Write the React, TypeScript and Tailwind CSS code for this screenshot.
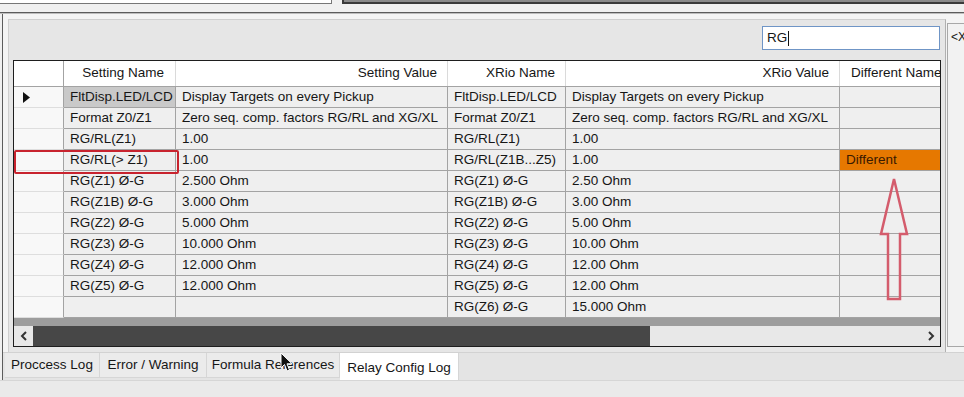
import React from 'react'

type Row = {
  mark?: boolean
  name: string
  value: string
  xName: string
  xValue: string
  diff?: string
}

const rows: Row[] = [
  { mark: true, name: 'FltDisp.LED/LCD', value: 'Display Targets on every Pickup', xName: 'FltDisp.LED/LCD', xValue: 'Display Targets on every Pickup' },
  { name: 'Format Z0/Z1', value: 'Zero seq. comp. factors RG/RL and XG/XL', xName: 'Format Z0/Z1', xValue: 'Zero seq. comp. factors RG/RL and XG/XL' },
  { name: 'RG/RL(Z1)', value: '1.00', xName: 'RG/RL(Z1)', xValue: '1.00' },
  { name: 'RG/RL(> Z1)', value: '1.00', xName: 'RG/RL(Z1B...Z5)', xValue: '1.00', diff: 'Different' },
  { name: 'RG(Z1) Ø-G', value: '2.500 Ohm', xName: 'RG(Z1) Ø-G', xValue: '2.50 Ohm' },
  { name: 'RG(Z1B) Ø-G', value: '3.000 Ohm', xName: 'RG(Z1B) Ø-G', xValue: '3.00 Ohm' },
  { name: 'RG(Z2) Ø-G', value: '5.000 Ohm', xName: 'RG(Z2) Ø-G', xValue: '5.00 Ohm' },
  { name: 'RG(Z3) Ø-G', value: '10.000 Ohm', xName: 'RG(Z3) Ø-G', xValue: '10.00 Ohm' },
  { name: 'RG(Z4) Ø-G', value: '12.000 Ohm', xName: 'RG(Z4) Ø-G', xValue: '12.00 Ohm' },
  { name: 'RG(Z5) Ø-G', value: '12.000 Ohm', xName: 'RG(Z5) Ø-G', xValue: '12.00 Ohm' },
  { name: '', value: '', xName: 'RG(Z6) Ø-G', xValue: '15.000 Ohm' }
]

const tabs = [
  { label: 'Proccess Log', w: 'w-[95px]' },
  { label: 'Error / Warning', w: 'w-[107px]' },
  { label: 'Formula References', w: 'w-[133px]' }
]

const cols = 'grid grid-cols-[50px_112px_272px_118px_274px_100px]'

function Cell({ children, selected, last }: { children?: React.ReactNode; selected?: boolean; last?: boolean }) {
  return (
    <div
      className={`h-[21px] flex items-center pl-[6px] whitespace-nowrap overflow-hidden border-b border-[#a3a3a3] ${
        last ? '' : 'border-r'
      } ${selected ? 'bg-[#c9c9c9]' : 'bg-[#efefef]'}`}
    >
      {children}
    </div>
  )
}

function Grid() {
  return (
    <div className="relative w-[928px] h-[287px] border border-[#1e1e1e] bg-[#9d9d9d] flex flex-col">
      {/* header */}
      <div className={`${cols} h-[26px] bg-white border-b border-[#a3a3a3]`}>
        <div className="border-r border-[#a3a3a3]" />
        <div className="flex items-center justify-end pr-[11px] border-r border-[#dadada]">Setting Name</div>
        <div className="flex items-center justify-end pr-[10px] border-r border-[#dadada]">Setting Value</div>
        <div className="flex items-center justify-end pr-[10px] border-r border-[#dadada]">XRio Name</div>
        <div className="flex items-center justify-end pr-[10px] border-r border-[#dadada]">XRio Value</div>
        <div className="flex items-center pl-[11px] whitespace-nowrap overflow-hidden">Different Name</div>
      </div>

      {rows.map((r, i) => (
        <div key={i} className={cols}>
          <div className="h-[21px] flex items-center pl-[9px] bg-[#f8f8f8] border-b border-[#dedede] border-r border-r-[#a3a3a3]">
            {r.mark && (
              <svg width="7" height="11" viewBox="0 0 7 11">
                <path d="M0 0 L7 5.5 L0 11 Z" fill="#111" />
              </svg>
            )}
          </div>
          <Cell selected={i === 0}>{r.name}</Cell>
          <Cell>{r.value}</Cell>
          <Cell>{r.xName}</Cell>
          <Cell>{r.xValue}</Cell>
          {r.diff ? (
            <div className="h-[21px] flex items-center pl-[6px] bg-[#e67800] text-[#3a1a00] border-b border-[#a3a3a3]">
              {r.diff}
            </div>
          ) : (
            <Cell last />
          )}
        </div>
      ))}

      <div className="flex-1" />

      {/* horizontal scrollbar */}
      <div className="h-[20px] flex bg-[#e8e8e8]">
        <div className="w-[19px] flex items-center justify-center">
          <svg width="8" height="10" viewBox="0 0 8 10">
            <path d="M6 1 L2 5 L6 9" fill="none" stroke="#333" strokeWidth="2" />
          </svg>
        </div>
        <div className="w-[617px] bg-[#474747]" />
        <div className="flex-1" />
        <div className="w-[19px] flex items-center justify-center">
          <svg width="8" height="10" viewBox="0 0 8 10">
            <path d="M2 1 L6 5 L2 9" fill="none" stroke="#333" strokeWidth="2" />
          </svg>
        </div>
      </div>

      {/* highlight box */}
      <div className="absolute left-0 top-[89px] w-[165px] h-[24px] border-2 border-[#c8232e] rounded-[2px]" />

      {/* arrow */}
      <svg className="absolute left-[865px] top-[116px]" width="32" height="128" viewBox="0 0 32 128">
        <path
          d="M15 2 L28 57 L21 57 L21 122 L9 122 L9 57 L2 57 Z"
          fill="none"
          stroke="#d45c6c"
          strokeWidth="2.5"
          strokeLinejoin="miter"
        />
      </svg>
    </div>
  )
}

export default function App() {
  return (
    <div className="relative w-[964px] h-[397px] overflow-hidden bg-[#f0f0f0] text-[13.5px] text-[#161616] font-['Liberation_Sans',Arial,sans-serif] flex flex-col">
      {/* top strip */}
      <div className="flex h-[4px]">
        <div className="w-[332px] bg-white border-r border-b border-[#777]" />
        <div className="w-[10px]" />
        <div className="flex-1 bg-[#8a8a8a] border-l-2 border-b-2 border-[#3a3a3a]" />
      </div>
      <div className="h-[8px]" />
      <div className="h-[2px] border-t border-[#5c5c5c] bg-[#bdbdbd]" />

      <div className="flex-1 flex flex-col ml-[2px] border-l border-[#5c5c5c]">
        {/* tab page */}
        <div className="h-[338px] flex pl-[5px] pt-[5px] bg-[#f4f4f4]">
          <div className="w-[938px] flex flex-col bg-[#e6e6e6] border-l border-t border-[#cfcfcf] border-r border-r-[#b0b0b0]">
            <div className="h-[40px] flex items-start justify-end pr-[5px] pt-[6px]">
              <div className="w-[178px] h-[24px] bg-white border border-[#6f95c6] flex items-center pl-[4px]">
                <span>RG</span>
                <span className="w-px h-[15px] bg-[#111] ml-px" />
              </div>
            </div>
            <div className="pl-[4px]">
              <Grid />
            </div>
          </div>
          <div className="flex-1 mt-[4px] mb-[5px] ml-[1px] bg-[#f2f2f2] border-l border-t border-b border-[#a8a8a8] pl-[3px] pt-[4px] overflow-hidden whitespace-nowrap text-[12px]">
            &lt;X
          </div>
        </div>

        {/* tabs */}
        <div className="h-[28px] flex items-start pl-[2px] border-t border-[#d2d2d2] bg-[#e4e4e4]">
          {tabs.map(t => (
            <div
              key={t.label}
              className={`${t.w} h-[25px] flex items-center justify-center bg-[#ebebeb] border-r border-b border-[#d6d6d6] whitespace-nowrap`}
            >
              {t.label}
            </div>
          ))}
          <div className="w-[119px] h-[28px] flex items-center justify-center bg-white border-r border-[#d6d6d6] pt-[3px] whitespace-nowrap">
            Relay Config Log
          </div>
        </div>
      </div>
      <div className="h-[17px] border-t border-[#d6d6d6] bg-[#eaeaea]" />

      {/* mouse pointer */}
      <svg className="absolute left-[280px] top-[352px]" width="14" height="21" viewBox="0 0 14 21">
        <path d="M1 1 L1 16 L4.5 12.5 L7 19 L9.5 18 L7 11.8 L12 11.8 Z" fill="#111" stroke="#fff" strokeWidth="1" />
      </svg>
    </div>
  )
}
